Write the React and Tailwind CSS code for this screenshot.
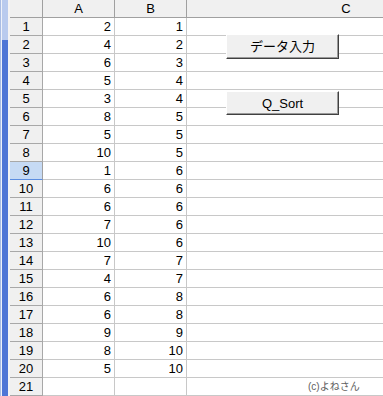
const colA = [2, 4, 6, 5, 3, 8, 5, 10, 1, 6, 6, 7, 10, 7, 4, 6, 6, 9, 8, 5]
const colB = [1, 2, 3, 4, 4, 5, 5, 5, 6, 6, 6, 6, 6, 7, 7, 8, 8, 9, 10, 10]

function Cell({ children, className = '' }) {
  return (
    <div className={`h-[18px] border-r border-b border-[#c8c8c8] bg-white flex items-center justify-end pr-[3px] ${className}`}>
      {children}
    </div>
  )
}

function RowHead({ n }) {
  const sel = n === 9
  return (
    <div
      className={`h-[18px] border-r border-b flex items-center justify-center ${
        sel ? 'bg-[#c6daf4] border-b-[#5b8de0] border-r-[#a0a0a0]' : 'bg-[#f0f0f0] border-[#a8a8a8]'
      }`}
    >
      {n}
    </div>
  )
}

function XlButton({ label, className = '' }) {
  return (
    <div
      className={`absolute left-[216px] w-[113px] flex items-center justify-center bg-[#f0f0f0] border border-t-white border-l-white border-r-[#404040] border-b-[#404040] shadow-[inset_-1px_-1px_0_#9a9a9a] text-[13px] text-black ${className}`}
    >
      {label}
    </div>
  )
}

export default function App() {
  const rows = Array.from({ length: 21 }, (_, i) => i + 1)

  return (
    <div
      className="flex w-[383px] h-[396px] overflow-hidden bg-white text-[13px] text-black leading-none"
      style={{ fontFamily: '"Liberation Sans", "Noto Sans CJK JP", sans-serif' }}
    >
      <div className="flex shrink-0">
        <div className="w-px bg-[#a9bde4]" />
        <div className="w-px bg-[#eef2fa]" />
        <div className="w-[6px] flex flex-col">
          <div className="h-[40px] bg-[#b9cbee]" />
          <div className="flex-1 bg-[#4f76d6]" />
        </div>
        <div className="w-[2px] bg-[#f4f4f4]" />
      </div>

      <div className="relative shrink-0">
        <div className="grid grid-cols-[33px_72px_72px_318px]">
          <div className="h-[18px] bg-[#f0f0f0] border-r border-b border-[#a0a0a0]" />
          <div className="h-[18px] bg-[#f0f0f0] border-r border-b border-[#a0a0a0] flex items-center justify-center">A</div>
          <div className="h-[18px] bg-[#f0f0f0] border-r border-b border-[#a0a0a0] flex items-center justify-center">B</div>
          <div className="h-[18px] bg-[#f0f0f0] border-b border-[#a0a0a0] flex items-center justify-center">C</div>

          {rows.map(n => (
            <div key={n} className="contents">
              <RowHead n={n} />
              <Cell>{colA[n - 1]}</Cell>
              <Cell>{colB[n - 1]}</Cell>
              <div className="h-[18px] border-b border-[#c8c8c8] bg-white flex items-center pl-[121px]">
                {n === 21 && <span className="text-[10px] text-[#606060]">(c)よねさん</span>}
              </div>
            </div>
          ))}
        </div>

        <XlButton label="データ入力" className="top-[34px] h-[25px]" />
        <XlButton label="Q_Sort" className="top-[91px] h-[24px]" />
      </div>
    </div>
  )
}
